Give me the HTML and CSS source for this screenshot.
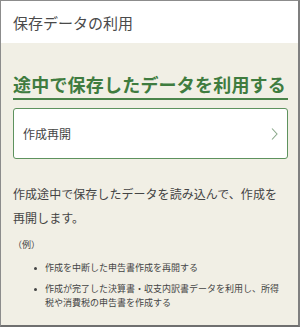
FILE: index.html
```html
<!DOCTYPE html>
<html lang="ja">
<head>
<meta charset="utf-8">
<link rel="stylesheet" href="styles.css">
</head>
<body>
<div class="frame">
  <header class="header">保存データの利用</header>
  <main class="main">
    <h1 class="heading">途中で保存したデータを利用する</h1>
    <a class="button" href="#">
      <span>作成再開</span>
      <svg class="chev" width="7" height="14" viewBox="0 0 7 14"><path d="M1 1.5 L6 7 L1 12.5" fill="none" stroke="#8aa88a" stroke-width="1.1"/></svg>
    </a>
    <p class="desc">作成途中で保存したデータを読み込んで、作成を再開します。</p>
    <p class="ex">（例）</p>
    <ul class="list">
      <li>作成を中断した申告書作成を再開する</li>
      <li>作成が完了した決算書・収支内訳書データを利用し、所得税や消費税の申告書を作成する</li>
    </ul>
  </main>
</div>
</body>
</html>
```

FILE: styles.css
```css
html, body {
  margin: 0;
  padding: 0;
}
body {
  font-family: "Noto Sans CJK JP", "Noto Sans", sans-serif;
  color: #444;
}
.frame {
  width: 300px;
  height: 327px;
  box-sizing: border-box;
  border-top: 1px solid #8c8c8c;
  border-left: 1px solid #8c8c8c;
  border-right: 2px solid #7f7f7f;
  border-bottom: 2px solid #6f6f6f;
  background: #f1efe5;
  overflow: hidden;
  display: flex;
  flex-direction: column;
}
.header {
  height: 42px;
  flex: none;
  background: #fff;
  display: flex;
  align-items: center;
  padding-left: 12px;
  font-size: 15px;
  color: #4a4a4a;
  padding-top: 1px;
  box-sizing: border-box;
}
.main {
  flex: 1;
  padding: 0 10px 0 12px;
}
.heading {
  margin: 29px 0 0;
  font-size: 18px;
  line-height: 24px;
  font-weight: 700;
  letter-spacing: 0.2px;
  color: #3f7c3f;
  padding-bottom: 2px;
  border-bottom: 2px solid #4a844a;
  white-space: nowrap;
}
.button {
  margin-top: 8px;
  height: 51px;
  box-sizing: border-box;
  background: #fff;
  border: 1.5px solid #5e925e;
  border-radius: 3px;
  display: flex;
  align-items: center;
  justify-content: space-between;
  padding: 0 9px 0 9px;
  font-size: 12px;
  color: #444;
  text-decoration: none;
}
.chev {
  display: block;
}
.desc {
  margin: 23px 0 0;
  padding-right: 8px;
  font-size: 12px;
  letter-spacing: 0.05px;
  line-height: 24px;
  color: #444;
}
.ex {
  margin: 8px 0 0;
  font-size: 9px;
  line-height: 14px;
  color: #444;
}
.list {
  list-style: none;
  margin: 9px 0 0;
  padding: 0 4px 0 20px;
  font-size: 9px;
  line-height: 14px;
  color: #444;
}
.list li {
  display: flex;
  margin-bottom: 7px;
}
.list li::before {
  content: "";
  flex: none;
  width: 3px;
  height: 3px;
  border-radius: 50%;
  background: #444;
  margin: 6px 8px 0 1px;
}
```
